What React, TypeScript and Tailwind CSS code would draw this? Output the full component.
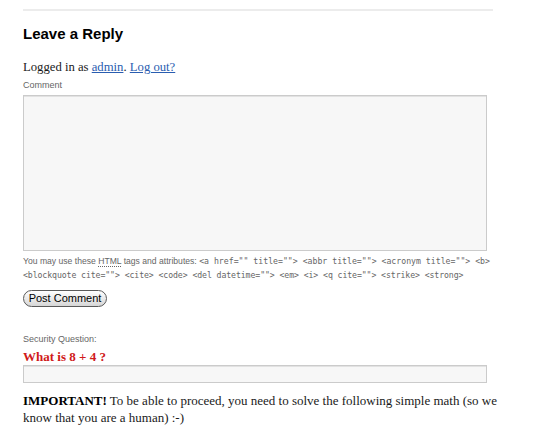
import React from "react";

const sans = { fontFamily: '"Liberation Sans", Arial, sans-serif' };
const serif = { fontFamily: '"Liberation Serif", "Times New Roman", serif' };
const mono = { fontFamily: '"DejaVu Sans Mono", monospace' };

export default function App() {
  return (
    <div className="bg-white w-[550px] h-[441px] pl-[23px] pt-[9px] text-[#222]" style={sans}>
      <div className="h-[2px] w-[470px] bg-[#ececec]" />
      <h3 className="mt-[14px] text-[15px] leading-[18px] font-bold text-black">Leave a Reply</h3>
      <p className="mt-[16px] text-[12.7px] leading-[17px] text-[#1a1a1a]" style={serif}>
        Logged in as <a className="text-[#2a5db0] underline" href="#">admin</a>.{" "}
        <a className="text-[#2a5db0] underline" href="#">Log out?</a>
      </p>
      <label className="block mt-[3px] text-[9px] leading-[12px] text-[#666]">Comment</label>
      <div className="mt-[4px] w-[464px] h-[156px] bg-[#f7f7f7] border border-[#cbcbcb] shadow-[inset_0_1px_0_#e2e2e2]" />
      <p className="mt-[4px] whitespace-nowrap text-[8.6px] leading-[13.5px] text-[#666]">
        You may use these{" "}
        <abbr className="no-underline border-b border-dotted border-[#666]" title="HyperText Markup Language">HTML</abbr>{" "}
        tags and attributes:{" "}
        <code className="text-[8.2px]" style={mono}>
          {'<a href="" title=""> <abbr title=""> <acronym title=""> <b>'}
        </code>
        <br />
        <code className="text-[8.2px] tracking-[-0.09px]" style={mono}>
          {'<blockquote cite=""> <cite> <code> <del datetime=""> <em> <i> <q cite=""> <strike> <strong>'}
        </code>
      </p>
      <button className="mt-[8px] h-[17px] w-[84px] rounded-full border border-[#5a5a5a] bg-gradient-to-b from-white to-[#d6d6d6] text-[11px] leading-[15px] text-black flex items-center justify-center">
        Post Comment
      </button>
      <label className="block mt-[26px] text-[9px] leading-[12px] text-[#666]">Security Question:</label>
      <p className="mt-[4px] text-[13px] leading-[16px] font-bold text-[#d01a1a]" style={serif}>What is 8 + 4 ?</p>
      <div className="w-[464px] h-[18px] bg-[#f7f7f7] border border-[#cbcbcb] shadow-[inset_0_1px_0_#e2e2e2]" />
      <p className="mt-[9px] whitespace-nowrap text-[13px] leading-[17px] text-[#1a1a1a]" style={serif}>
        <strong className="text-black">IMPORTANT!</strong> To be able to proceed, you need to solve the following simple math (so we
        <br />
        know that you are a human) :-)
      </p>
    </div>
  );
}
